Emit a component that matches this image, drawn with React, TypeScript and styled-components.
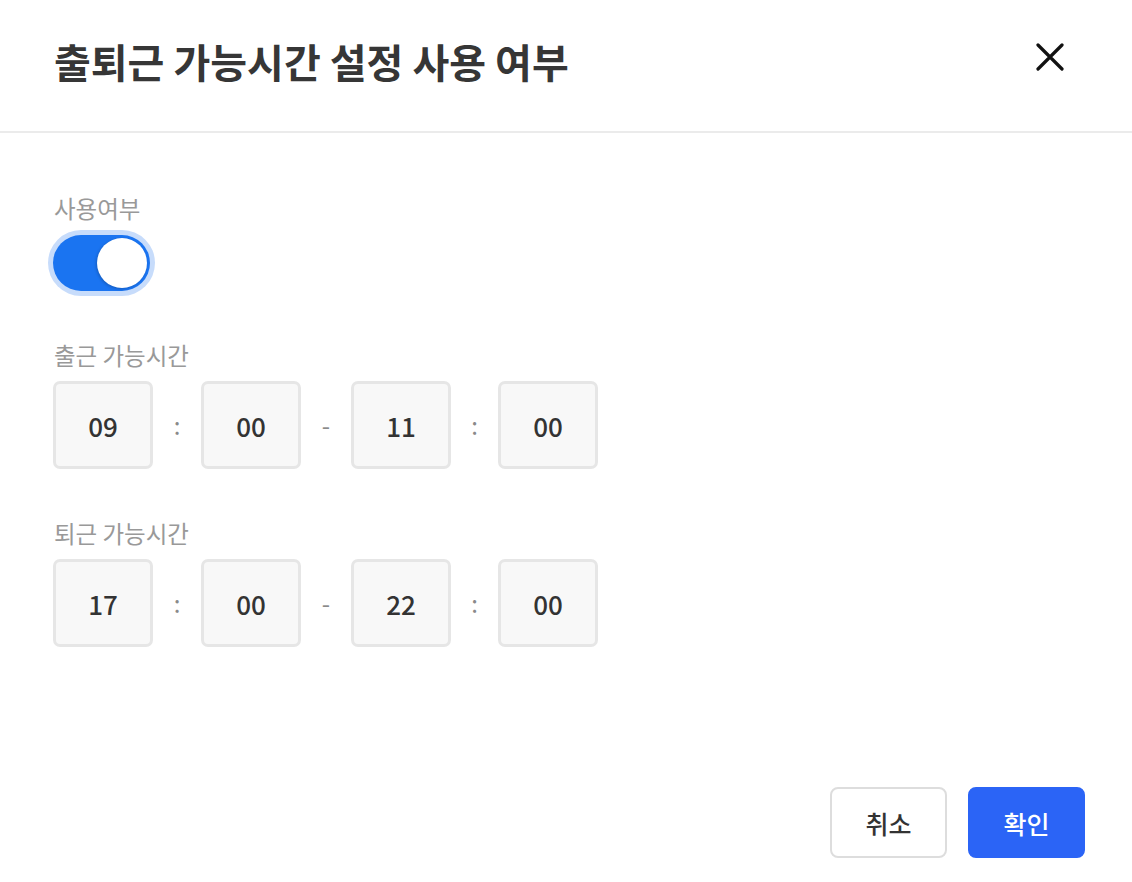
import React, { useState } from "react";
import styled, { createGlobalStyle } from "styled-components";

const GlobalStyle = createGlobalStyle`
  html, body {
    margin: 0;
    padding: 0;
    background: #ffffff;
  }
  body {
    font-family: "Noto Sans CJK KR", "Noto Sans", sans-serif;
  }
  * { box-sizing: border-box; }
`;

const Dialog = styled.div`
  width: 1132px;
  height: 882px;
  background: #ffffff;
  display: flex;
  flex-direction: column;
`;

const Header = styled.header`
  height: 133px;
  flex-shrink: 0;
  display: flex;
  align-items: flex-start;
  justify-content: space-between;
  padding: 41px 68px 0 54px;
  border-bottom: 2px solid #ebebeb;
`;

const Title = styled.h1`
  margin: 0;
  font-size: 40px;
  line-height: 40px;
  font-weight: 700;
  color: #363636;
`;

const CloseButton = styled.button`
  margin-top: 2px;
  width: 28px;
  height: 28px;
  padding: 0;
  border: none;
  background: transparent;
  cursor: pointer;
  display: flex;
  align-items: center;
  justify-content: center;
`;

const Body = styled.main`
  flex: 1;
  display: flex;
  flex-direction: column;
  gap: 48px;
  padding: 59px 53px 0 53px;
`;

const Field = styled.section<{ $gap: number }>`
  display: flex;
  flex-direction: column;
  align-items: flex-start;
  gap: ${(p) => p.$gap}px;
`;

const Label = styled.div`
  font-size: 23.5px;
  line-height: 33px;
  color: #999999;
  padding-left: 1px;
`;

const Toggle = styled.button<{ $on: boolean }>`
  position: relative;
  width: 97px;
  height: 56px;
  border-radius: 28px;
  border: none;
  padding: 0;
  cursor: pointer;
  background: ${(p) => (p.$on ? "#1a74f1" : "#d0d0d0")};
  box-shadow: 0 0 0 5px #c7dcfb;
`;

const Knob = styled.span<{ $on: boolean }>`
  position: absolute;
  top: 3px;
  left: ${(p) => (p.$on ? "44px" : "3px")};
  width: 50px;
  height: 50px;
  border-radius: 50%;
  background: #ffffff;
  box-shadow: -1px 1px 3px rgba(0, 0, 0, 0.2);
`;

const TimeRow = styled.div`
  display: flex;
  align-items: center;
`;

const TimeBox = styled.div`
  width: 100px;
  height: 88px;
  border: 3px solid #e6e6e6;
  border-radius: 7px;
  background: #f8f8f8;
  display: flex;
  align-items: center;
  justify-content: center;
  font-size: 26px;
  font-weight: 500;
  color: #333333;
`;

const Sep = styled.span<{ $w: number }>`
  width: ${(p) => p.$w}px;
  text-align: center;
  font-size: 24px;
  color: #8a8a8a;
  line-height: 1;
`;

const Footer = styled.footer`
  display: flex;
  justify-content: flex-end;
  gap: 21px;
  padding: 0 47px 24px 0;
`;

const Button = styled.button<{ $primary?: boolean }>`
  width: 117px;
  height: 71px;
  border-radius: 8px;
  font-family: "Noto Sans CJK KR", "Noto Sans", sans-serif;
  font-size: 25px;
  font-weight: 500;
  cursor: pointer;
  border: 2px solid ${(p) => (p.$primary ? "#2b64f6" : "#dddddd")};
  background: ${(p) => (p.$primary ? "#2b64f6" : "#ffffff")};
  color: ${(p) => (p.$primary ? "#ffffff" : "#333333")};
`;

const TimeRange: React.FC<{ values: [string, string, string, string] }> = ({ values }) => (
  <TimeRow>
    <TimeBox>{values[0]}</TimeBox>
    <Sep $w={48}>:</Sep>
    <TimeBox>{values[1]}</TimeBox>
    <Sep $w={50}>-</Sep>
    <TimeBox>{values[2]}</TimeBox>
    <Sep $w={47}>:</Sep>
    <TimeBox>{values[3]}</TimeBox>
  </TimeRow>
);

export default function App() {
  const [on, setOn] = useState(true);
  return (
    <>
      <GlobalStyle />
      <Dialog>
        <Header>
          <Title>출퇴근 가능시간 설정 사용 여부</Title>
          <CloseButton aria-label="닫기">
            <svg width="28" height="28" viewBox="0 0 28 28">
              <path d="M2 2 L26 26 M26 2 L2 26" stroke="#111" strokeWidth="3.2" strokeLinecap="round" />
            </svg>
          </CloseButton>
        </Header>
        <Body>
          <Field $gap={10}>
            <Label>사용여부</Label>
            <Toggle $on={on} onClick={() => setOn(!on)}>
              <Knob $on={on} />
            </Toggle>
          </Field>
          <Field $gap={9}>
            <Label>출근 가능시간</Label>
            <TimeRange values={["09", "00", "11", "00"]} />
          </Field>
          <Field $gap={9}>
            <Label>퇴근 가능시간</Label>
            <TimeRange values={["17", "00", "22", "00"]} />
          </Field>
        </Body>
        <Footer>
          <Button>취소</Button>
          <Button $primary>확인</Button>
        </Footer>
      </Dialog>
    </>
  );
}
